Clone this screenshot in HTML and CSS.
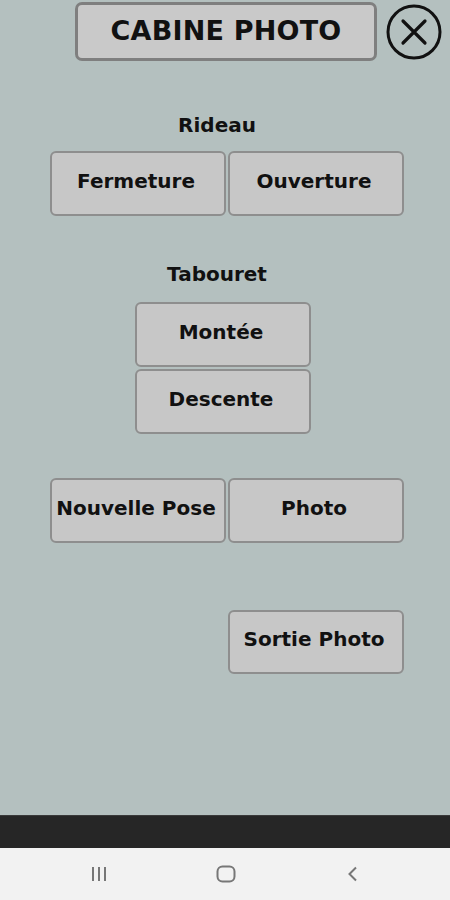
FILE: index.html
```html
<!DOCTYPE html>
<html>
  <head>
    <title>Cabine Photo</title>
    <link rel="stylesheet" href="styles.css">
  </head>
  <body>
    <div class="screen">
      <div class="header">
        <button class="title-btn">CABINE PHOTO</button>
        <button class="close-btn" aria-label="Fermer">
          <svg width="56" height="56" viewBox="0 0 56 56">
            <circle cx="28" cy="28" r="26" fill="none" stroke="#111" stroke-width="3"/>
            <path d="M17 17 L39 39 M39 17 L17 39" stroke="#111" stroke-width="3.2" stroke-linecap="round"/>
          </svg>
        </button>
      </div>

      <div class="panel">
        <div class="label label-rideau">Rideau</div>
        <div class="row">
          <button class="btn">Fermeture</button>
          <button class="btn">Ouverture</button>
        </div>

        <div class="label label-tabouret">Tabouret</div>
        <div class="stack">
          <button class="btn">Montée</button>
          <button class="btn">Descente</button>
        </div>

        <div class="row row-pose">
          <button class="btn">Nouvelle Pose</button>
          <button class="btn">Photo</button>
        </div>

        <div class="row row-sortie">
          <button class="btn btn-short">Sortie Photo</button>
        </div>
      </div>
    </div>

    <div class="black-bar"></div>

    <div class="nav-bar">
      <svg class="nav-icon" width="20" height="16" viewBox="0 0 20 16">
        <path d="M3 1 V15 M9 1 V15 M15 1 V15" stroke="#777" stroke-width="2"/>
      </svg>
      <svg class="nav-icon" width="20" height="18" viewBox="0 0 20 18">
        <rect x="1.5" y="1.5" width="17" height="15" rx="5" fill="none" stroke="#777" stroke-width="2"/>
      </svg>
      <svg class="nav-icon" width="14" height="16" viewBox="0 0 14 16">
        <path d="M10 1.5 L3.5 8 L10 14.5" fill="none" stroke="#777" stroke-width="2"/>
      </svg>
    </div>
  </body>
</html>
```

FILE: styles.css
```css
html, body {
  margin: 0;
  padding: 0;
}

body {
  width: 450px;
  height: 900px;
  display: flex;
  flex-direction: column;
  background-color: #b4c0bf;
  font-family: "DejaVu Sans", Verdana, sans-serif;
  color: #111;
}

.screen {
  height: 815px;
  box-sizing: border-box;
  padding-top: 2px;
}

.header {
  display: flex;
  align-items: flex-start;
  padding-left: 75px;
}

button {
  font-family: "DejaVu Sans", Verdana, sans-serif;
  font-weight: bold;
  color: #111;
  cursor: pointer;
}

.title-btn {
  width: 302px;
  height: 59px;
  background-color: #c9c9c9;
  border: 3px solid #7f7f7f;
  border-radius: 7px;
  font-size: 27px;
  padding: 0 0 3px 0;
  letter-spacing: 0.2px;
}

.close-btn {
  background: none;
  border: none;
  padding: 0;
  margin-left: 9px;
  margin-top: 2px;
  width: 56px;
  height: 56px;
}

.close-btn svg {
  display: block;
}

.panel {
  margin-left: 50px;
  width: 354px;
}

.label {
  font-weight: bold;
  font-size: 20px;
  line-height: 24px;
  text-align: center;
  padding-right: 20px;
}

.label-rideau {
  margin-top: 52px;
}

.label-tabouret {
  margin-top: 46px;
}

.row {
  display: flex;
  gap: 2px;
  margin-top: 14px;
}

.stack {
  display: flex;
  flex-direction: column;
  gap: 2px;
  margin-top: 16px;
  margin-left: 85px;
}

.row-pose {
  margin-top: 44px;
}

.row-sortie {
  margin-top: 67px;
  padding-left: 178px;
}

.btn {
  width: 176px;
  height: 65px;
  background-color: #c7c7c7;
  border: 2px solid #8e8e8e;
  border-radius: 6px;
  font-size: 20px;
  padding: 0 4px 6px 0;
  white-space: nowrap;
}

.btn-short {
  height: 64px;
}

.black-bar {
  height: 33px;
  background-color: #262626;
  border-top: 1px solid #3a3a3a;
  box-sizing: border-box;
}

.nav-bar {
  flex: 1;
  background-color: #f2f2f2;
  display: flex;
  align-items: center;
  justify-content: center;
  gap: 0;
}

.nav-icon:nth-child(1) {
  margin-right: 106px;
}

.nav-icon:nth-child(3) {
  margin-left: 110px;
}
```
